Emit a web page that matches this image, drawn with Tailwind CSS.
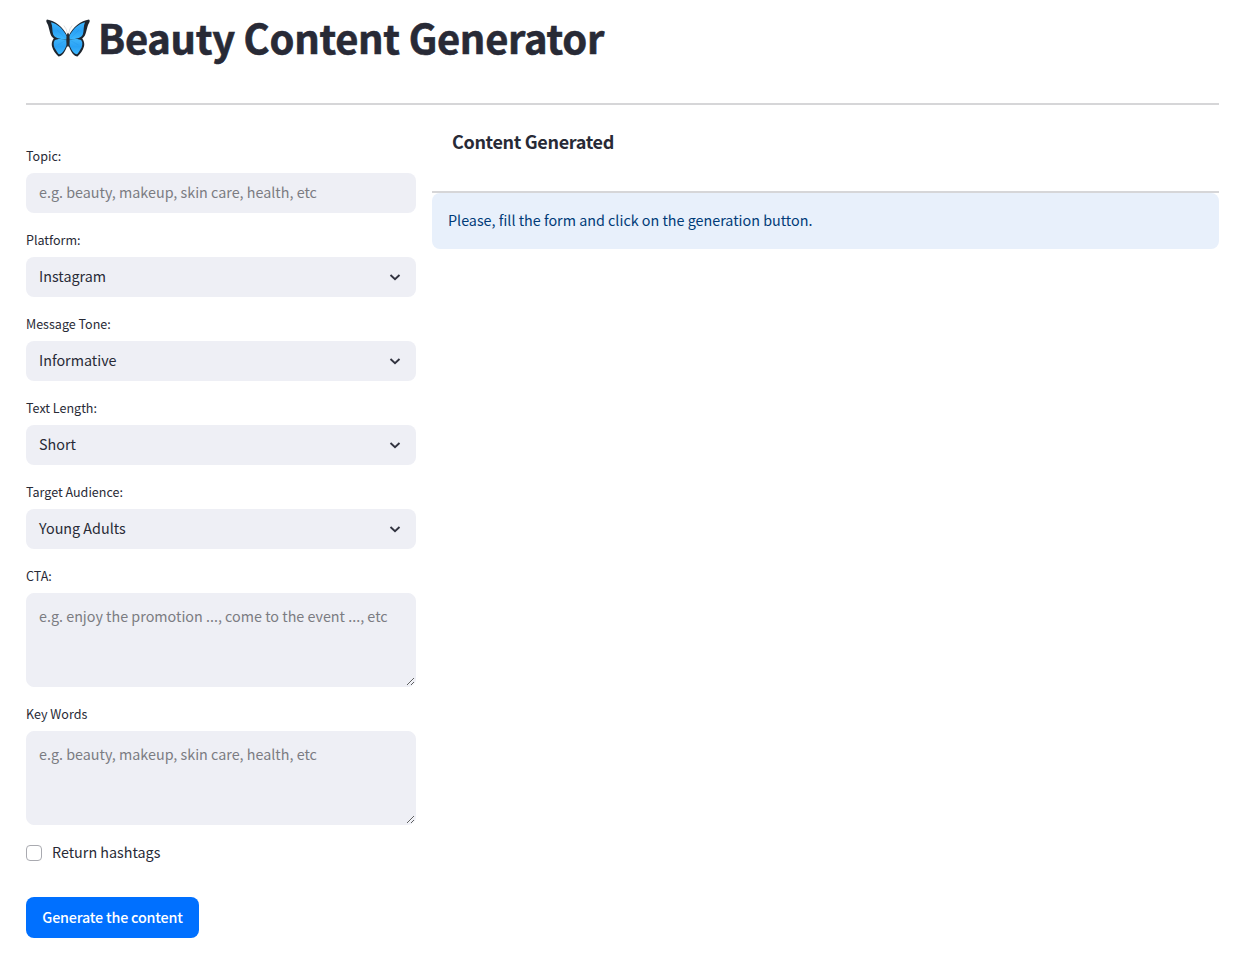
<!DOCTYPE html>
<html lang="en">
<head>
<meta charset="utf-8">
<title>Beauty Content Generator</title>
<script src="https://cdn.jsdelivr.net/npm/@tailwindcss/browser@4"></script>
</head>
<body class="bg-white text-[#282a36] text-[14.33px] font-['Noto_Sans_CJK_SC','Noto_Sans',sans-serif] h-[965px] overflow-hidden px-[26px]">
<header class="h-[105px] border-b-2 border-[#d6d6d8] pl-5 flex items-start">
  <svg class="w-11 h-[38px] mt-[19px] shrink-0" viewBox="0 0 44 38">
    <defs><linearGradient id="wing" x1="0" y1="0" x2="0" y2="1"><stop offset="0" stop-color="#3db4fb"/><stop offset=".5" stop-color="#2aa2f5"/><stop offset="1" stop-color="#3cb8ff"/></linearGradient></defs>
    <g id="half">
      <path d="M21.500 17C17 8 9 1.500 1 .5C-.6 2 .8 3.500 2 6C3.500 10 3.800 17 7.800 19.500C5.900 22 5.200 25 6.200 28C7.100 31.500 9.500 34.500 12.500 37.600C15.800 37.500 19.300 33 21.500 26Z" fill="#1e252e"/>
      <path d="M21.200 18C17 9.500 11.500 4.800 5 3.200C6.800 7 5.900 12 7.200 15.500C8.500 18.800 12 19.600 21 20.800Z" fill="url(#wing)"/>
      <path d="M21 21C16 19.500 11 19.500 8.500 21.500C7 24 7.600 28 9.600 30.500C11 33 12.300 35.300 13.500 35.300C16.800 34.500 20 29 21 24Z" fill="url(#wing)"/>
      <path d="M20.500 20L11 11M20.500 21L11.500 26" stroke="#1f8ee0" stroke-width=".3" fill="none"/>
      <path d="M21.500 15Q20.500 9 17.800 6.500" stroke="#ccc" stroke-width=".6" fill="none"/>
    </g>
    <use href="#half" transform="translate(44 0) scale(-1 1)"/>
    <ellipse cx="22" cy="21" rx="1.700" ry="7" fill="#292b30"/>
  </svg>
  <h1 class="ml-2 mt-[11px] leading-[52px] text-[39.9px] tracking-[-0.28px] [-webkit-text-stroke:0.6px_#282a36] font-bold whitespace-nowrap">Beauty Content Generator</h1>
</header>
<main class="flex gap-4">
  <form class="w-[390px] pt-10">
    <div class="h-[84px]"><label class="block h-7 leading-[22px] text-[12.54px]">Topic:</label><input class="block w-full h-10 rounded-lg bg-[#eeeff5] px-[13px] pb-[3px] placeholder:text-[#7b7c82]" placeholder="e.g. beauty, makeup, skin care, health, etc"></div>
    <div class="h-[84px]"><label class="block h-7 leading-[22px] text-[12.54px]">Platform:</label><div class="flex items-center justify-between h-10 rounded-lg bg-[#eeeff5] pl-[13px] pr-[15px]"><span class="pb-[2px]">Instagram</span><svg class="w-3 h-[7px]" viewBox="0 0 12 7"><path d="M1.500 1L6 5.100L10.500 1" fill="none" stroke="#31333f" stroke-width="1.900"/></svg></div></div>
    <div class="h-[84px]"><label class="block h-7 leading-[22px] text-[12.54px]">Message Tone:</label><div class="flex items-center justify-between h-10 rounded-lg bg-[#eeeff5] pl-[13px] pr-[15px]"><span class="pb-[2px]">Informative</span><svg class="w-3 h-[7px]" viewBox="0 0 12 7"><path d="M1.500 1L6 5.100L10.500 1" fill="none" stroke="#31333f" stroke-width="1.900"/></svg></div></div>
    <div class="h-[84px]"><label class="block h-7 leading-[22px] text-[12.54px]">Text Length:</label><div class="flex items-center justify-between h-10 rounded-lg bg-[#eeeff5] pl-[13px] pr-[15px]"><span class="pb-[2px]">Short</span><svg class="w-3 h-[7px]" viewBox="0 0 12 7"><path d="M1.500 1L6 5.100L10.500 1" fill="none" stroke="#31333f" stroke-width="1.900"/></svg></div></div>
    <div class="h-[84px]"><label class="block h-7 leading-[22px] text-[12.54px]">Target Audience:</label><div class="flex items-center justify-between h-10 rounded-lg bg-[#eeeff5] pl-[13px] pr-[15px]"><span class="pb-[2px]">Young Adults</span><svg class="w-3 h-[7px]" viewBox="0 0 12 7"><path d="M1.500 1L6 5.100L10.500 1" fill="none" stroke="#31333f" stroke-width="1.900"/></svg></div></div>
    <div class="h-[138px]"><label class="block h-7 leading-[22px] text-[12.54px]">CTA:</label><textarea class="block w-full h-[94px] rounded-lg border border-[#eeeff5] bg-[#eeeff5] px-3 pt-[10px] leading-[24px] placeholder:text-[#7b7c82]" placeholder="e.g. enjoy the promotion ..., come to the event ..., etc"></textarea></div>
    <div class="h-[138px]"><label class="block h-7 leading-[22px] text-[12.54px]">Key Words</label><textarea class="block w-full h-[94px] rounded-lg border border-[#eeeff5] bg-[#eeeff5] px-3 pt-[10px] leading-[24px] placeholder:text-[#7b7c82]" placeholder="e.g. beauty, makeup, skin care, health, etc"></textarea></div>
    <label class="flex items-start h-[56px]"><span class="w-4 h-4 mt-1 rounded border border-[#a9aab0]"></span><span class="ml-[10px] leading-[22px]">Return hashtags</span></label>
    <button type="button" class="block w-[173px] h-[41px] rounded-lg bg-[#0070ff] text-white font-medium tracking-[-0.2px] pb-[2px] whitespace-nowrap">Generate the content</button>
  </form>
  <section class="flex-1">
    <div class="h-[88px] border-b-2 border-[#d6d6d8] pl-5 pt-[22px]"><h2 class="text-[18px] tracking-[-0.34px] leading-[28px] font-bold">Content Generated</h2></div>
    <p class="h-14 rounded-lg bg-[#e8f0fb] text-[#003b78] pl-4 leading-[54px]">Please, fill the form and click on the generation button.</p>
  </section>
</main>
</body>
</html>
